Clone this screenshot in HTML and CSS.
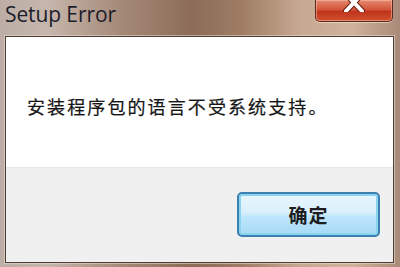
FILE: index.html
```html
<!DOCTYPE html>
<html>
<head>
<meta charset="utf-8">
<link rel="stylesheet" href="styles.css">
</head>
<body>
<div class="window">
  <div class="titlebar">
    <div class="title">Setup Error</div>
    <div class="close">
      <svg class="close-x" width="22" height="18" viewBox="0 0 22 18">
        <path d="M3 0 L19 17 M19 0 L3 17" stroke="#6a1a10" stroke-width="6" stroke-linecap="round"/>
        <path d="M3 0 L19 17 M19 0 L3 17" stroke="#ffffff" stroke-width="4" stroke-linecap="round"/>
      </svg>
    </div>
  </div>
  <div class="client">
    <div class="content">
      <p class="message">安装程序包的语言不受系统支持。</p>
    </div>
    <div class="footer">
      <button class="btn">确定</button>
    </div>
  </div>
</div>
</body>
</html>
```

FILE: styles.css
```css
html, body {
  margin: 0;
  padding: 0;
  width: 400px;
  height: 267px;
  overflow: hidden;
}
.window {
  width: 400px;
  height: 267px;
  box-sizing: border-box;
  display: flex;
  flex-direction: column;
  padding: 0 6px 4px 5px;
  background: linear-gradient(90deg, #bcaea6 0%, #c6b6ac 12%, #a58a78 30%, #8c6c58 48%, #9e7c64 60%, #c7a890 75%, #cfb39c 88%, #a88a78 100%);
}
.titlebar {
  height: 36px;
  flex: none;
  display: flex;
  align-items: flex-start;
  justify-content: space-between;
}
.title {
  font-family: "Open Sans", "Noto Sans", sans-serif;
  font-size: 21px;
  line-height: 26px;
  color: #1c1c2a;
  padding-top: 1px;
  letter-spacing: -0.1px;
}
.close {
  width: 78px;
  height: 22px;
  margin-right: 1px;
  box-sizing: border-box;
  border: 1px solid #5a2a20;
  border-top: none;
  border-radius: 0 0 5px 5px;
  background: linear-gradient(180deg, #e58a70 0%, #d4553a 45%, #c0341c 55%, #d0502e 100%);
  box-shadow: inset 0 0 0 1px rgba(255,200,180,0.5), 0 1px 0 rgba(255,230,210,0.6);
  display: flex;
  justify-content: center;
  align-items: flex-start;
  overflow: hidden;
}
.close-x {
  margin-top: -6px;
}
.client {
  flex: 1;
  display: flex;
  flex-direction: column;
  border: 1px solid #4e3e36;
  box-shadow: 0 0 0 1px rgba(230,215,205,0.6);
  background: #f0f0f0;
}
.content {
  height: 130px;
  background: #ffffff;
  display: flex;
  align-items: flex-start;
}
.message {
  margin: 58px 0 0 21px;
  font-family: "Noto Sans CJK SC", sans-serif;
  font-size: 18px;
  line-height: 22px;
  letter-spacing: 2.1px;
  color: #151515;
  -webkit-text-stroke: 0.2px #151515;
}
.footer {
  flex: 1;
  background: #f0f0f0;
  border-top: 1px solid #e6e6e6;
  display: flex;
  justify-content: flex-end;
  align-items: flex-start;
  padding: 24px 13px 0 0;
}
.btn {
  width: 143px;
  height: 45px;
  border: 2px solid #3c7fb1;
  border-radius: 5px;
  background: linear-gradient(180deg, #eaf6fd 0%, #d9f0fc 45%, #bee6fd 55%, #a7d9f5 100%);
  box-shadow: inset 0 0 0 2px #8ad4f0;
  font-family: "Noto Sans CJK SC", sans-serif;
  font-size: 19px;
  font-weight: bold;
  color: #1e1e1e;
  padding: 0;
  letter-spacing: 1px;
}
```
